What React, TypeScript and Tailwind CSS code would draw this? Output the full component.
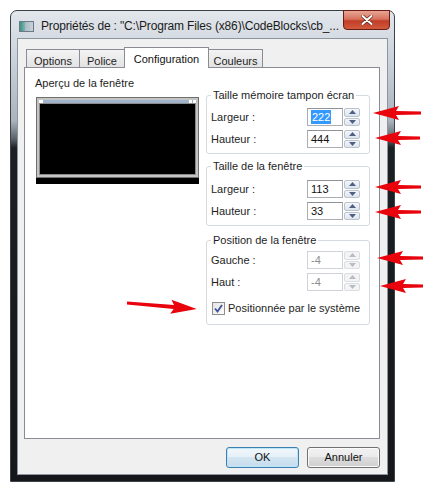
import React from "react";

const font = { fontFamily: '"Liberation Sans", Arial, sans-serif' };

const arrowPts = (L: number) =>
  `${L},0 ${L - 26},-7 ${L - 23},-2 0,-1.6 0,1.6 ${L - 23},2 ${L - 26},7`;

const Arrows = () => {
  const right: [number, number, number][] = [
    [373, 113, 421],
    [375, 138, 420],
    [375, 187, 421],
    [375, 212, 421],
    [377, 258, 423],
    [380, 286, 423],
  ];
  return (
    <svg className="absolute left-0 top-0 pointer-events-none" width="425" height="489">
      {right.map(([tip, y, tail], i) => (
        <polygon
          key={i}
          points={arrowPts(tail - tip)}
          transform={`translate(${tail} ${y}) rotate(180)`}
          fill="#e8030d"
        />
      ))}
      <polygon points={arrowPts(70)} transform="translate(127 303) rotate(4.9)" fill="#e8030d" />
    </svg>
  );
};

const Spinner = ({ disabled }: { disabled?: boolean }) => (
  <div className="flex flex-col w-[16px] h-[18px] gap-px">
    {[0, 1].map((i) => (
      <div
        key={i}
        className={`flex-1 flex items-center justify-center rounded-[2px] border ${
          disabled
            ? "border-[#dadde2] bg-[#f4f4f4]"
            : "border-[#b9c2cd] bg-[linear-gradient(to_bottom,#f4f7fa,#dde4ec)]"
        }`}
      >
        <svg width="7" height="4" viewBox="0 0 7 4">
          <polygon
            points={i === 0 ? "3.5,0 7,4 0,4" : "0,0 7,0 3.5,4"}
            fill={disabled ? "#b8bcc2" : "#4d5f85"}
          />
        </svg>
      </div>
    ))}
  </div>
);

const Row = ({
  label,
  value,
  selected,
  disabled,
}: {
  label: string;
  value: string;
  selected?: boolean;
  disabled?: boolean;
}) => (
  <div className="flex items-center h-[18px]">
    <div className="w-[100px] pl-[4px] text-[11px] text-[#1e1e1e]">{label}</div>
    <div
      className={`w-[36px] h-[18px] border flex items-center pl-[3px] text-[11px] ${
        disabled
          ? "border-[#cfd2d6] bg-white text-[#8c8c8c]"
          : "border-[#abadb3] border-t-[#8e9196] bg-white text-[#111]"
      }`}
    >
      {selected ? <span className="bg-[#3399ff] text-white px-px leading-[14px]">{value}</span> : value}
    </div>
    <div className="ml-px">
      <Spinner disabled={disabled} />
    </div>
  </div>
);

const Group = ({ title, children, className }: { title: string; children: React.ReactNode; className?: string }) => (
  <fieldset className={`w-[164px] border border-[#d5dbe1] rounded-[3px] ${className ?? ""}`}>
    <legend className="ml-[4px] px-[2px] text-[11px] leading-[14px] text-[#1e1e1e]">{title}</legend>
    {children}
  </fieldset>
);

const Tab = ({ label, w, active }: { label: string; w: string; active?: boolean }) => (
  <div
    className={`${w} flex justify-center text-[11px] border border-b-0 ${
      active
        ? "h-[21px] mb-[-1px] relative z-10 bg-white border-[#898c95] pt-[3px] text-[#111]"
        : "h-[18px] bg-[linear-gradient(to_bottom,#f3f3f3,#e3e3e3)] border-[#898c95] pt-[3px] text-[#1e1e1e] -ml-px first:ml-0"
    }`}
  >
    {label}
  </div>
);

const Btn = ({ label, def }: { label: string; def?: boolean }) => (
  <div
    className={`w-[73px] h-[21px] rounded-[3px] border flex items-center justify-center text-[11px] text-[#111] ${
      def
        ? "border-[#3c7fb1] shadow-[inset_0_0_0_1px_#bfe6f8] bg-[linear-gradient(to_bottom,#f2f8fc_0%,#e5f0f7_45%,#d2e5f1_50%,#c6dced_100%)]"
        : "border-[#707070] shadow-[inset_0_0_0_1px_#fbfbfb] bg-[linear-gradient(to_bottom,#f2f2f2_0%,#ebebeb_45%,#dddddd_50%,#cfcfcf_100%)]"
    }`}
  >
    {label}
  </div>
);

export default function App() {
  return (
    <div className="relative w-[425px] h-[489px] bg-white overflow-hidden" style={font}>
      <div className="ml-[10px] mt-[10px] w-[385px] h-[472px] flex flex-col rounded-t-[7px] border border-[#3b4148] bg-[linear-gradient(to_bottom,#e2e7ec_0px,#c9d1d9_50px,#aab3bc_110px,#5a6168_128px,#1c1f23_137px,#15171a_100%)]">
        {/* title bar */}
        <div className="h-[27px] flex items-center relative">
          <div className="ml-[8px] w-[15px] h-[11px] mt-[3px] border border-[#6b7a88] bg-[linear-gradient(to_right,#3f8f86_0%,#74b3a8_35%,#aab7c3_36%,#c9d2da_100%)]" />
          <div className="ml-[7px] mt-[3px] text-[12px] tracking-[-0.15px] text-[#1b1b1b] whitespace-nowrap">
            Propriétés de : "C:\Program Files (x86)\CodeBlocks\cb_...
          </div>
          <div className="absolute right-[4px] top-[-1px] w-[47px] h-[20px] rounded-b-[4px] border border-[#6a1d12] bg-[linear-gradient(to_bottom,#e8a595_0%,#d8735f_45%,#c33d25_55%,#cf5a3d_100%)] flex items-center justify-center">
            <svg width="12" height="10" viewBox="0 0 12 10">
              <path d="M1.5 1 L10.5 9 M10.5 1 L1.5 9" stroke="#5b2a22" strokeWidth="3.4" strokeLinecap="round" />
              <path d="M1.5 1 L10.5 9 M10.5 1 L1.5 9" stroke="#ffffff" strokeWidth="2" strokeLinecap="round" />
            </svg>
          </div>
        </div>

        {/* client area */}
        <div className="flex-1 mx-[6px] mb-[6px] bg-[#f0f0f0] border border-[#8d959e] pl-[6px] pt-[8px]">
          <div className="flex items-end h-[20px] pl-[2px]">
            <Tab label="Options" w="w-[54px]" />
            <Tab label="Police" w="w-[46px]" />
            <div className="-ml-px">
              <Tab label="Configuration" w="w-[85px]" active />
            </div>
            <div className="-ml-px">
              <Tab label="Couleurs" w="w-[55px]" />
            </div>
          </div>
          <div className="w-[356px] h-[372px] border border-[#898c95] bg-white flex">
            <div className="w-[181px] pl-[10px] pt-[8px]">
              <div className="text-[11px] leading-[14px] text-[#1e1e1e]">Aperçu de la fenêtre</div>
              <div className="mt-[7px] ml-px w-[163px] flex flex-col">
                <div className="h-[81px] border border-[#6f6f6f] bg-[#c4c4c4] p-[2px] flex flex-col">
                  <div className="h-[3px] bg-[#9fb4ca] flex justify-between">
                    <div className="w-[4px] bg-white" />
                    <div className="flex gap-px">
                      <div className="w-[3px] bg-white" />
                      <div className="w-[3px] bg-white" />
                    </div>
                  </div>
                  <div className="flex-1 bg-black border border-[#8a8a8a]" />
                </div>
                <div className="h-[6px] bg-black" />
              </div>
            </div>
            <div className="pt-[20px]">
              <Group title="Taille mémoire tampon écran" className="pb-[5px]">
                <div className="mt-[6px] flex flex-col gap-[4px]">
                  <Row label="Largeur :" value="222" selected />
                  <Row label="Hauteur :" value="444" />
                </div>
              </Group>
              <Group title="Taille de la fenêtre" className="mt-[5px] pb-[5px]">
                <div className="mt-[7px] flex flex-col gap-[4px]">
                  <Row label="Largeur :" value="113" />
                  <Row label="Hauteur :" value="33" />
                </div>
              </Group>
              <Group title="Position de la fenêtre" className="mt-[7px] pb-[7px]">
                <div className="mt-[4px] flex flex-col gap-[4px]">
                  <Row label="Gauche :" value="-4" disabled />
                  <Row label="Haut :" value="-4" disabled />
                </div>
                <div className="mt-[9px] flex items-center pl-[5px]">
                  <div className="w-[13px] h-[13px] border border-[#8f8f8f] bg-[linear-gradient(135deg,#e4e4e4,#fbfbfb)] flex items-center justify-center">
                    <svg width="9" height="9" viewBox="0 0 9 9">
                      <path d="M1 4.5 L3.5 7.5 L8 1" stroke="#3d5199" strokeWidth="1.8" fill="none" />
                    </svg>
                  </div>
                  <span className="ml-[3px] text-[11px] text-[#1e1e1e]">Positionnée par le système</span>
                </div>
              </Group>
            </div>
          </div>
          <div className="w-[356px] flex justify-end gap-[8px] mt-[8px]">
            <Btn label="OK" def />
            <Btn label="Annuler" />
          </div>
        </div>
      </div>
      <Arrows />
    </div>
  );
}
